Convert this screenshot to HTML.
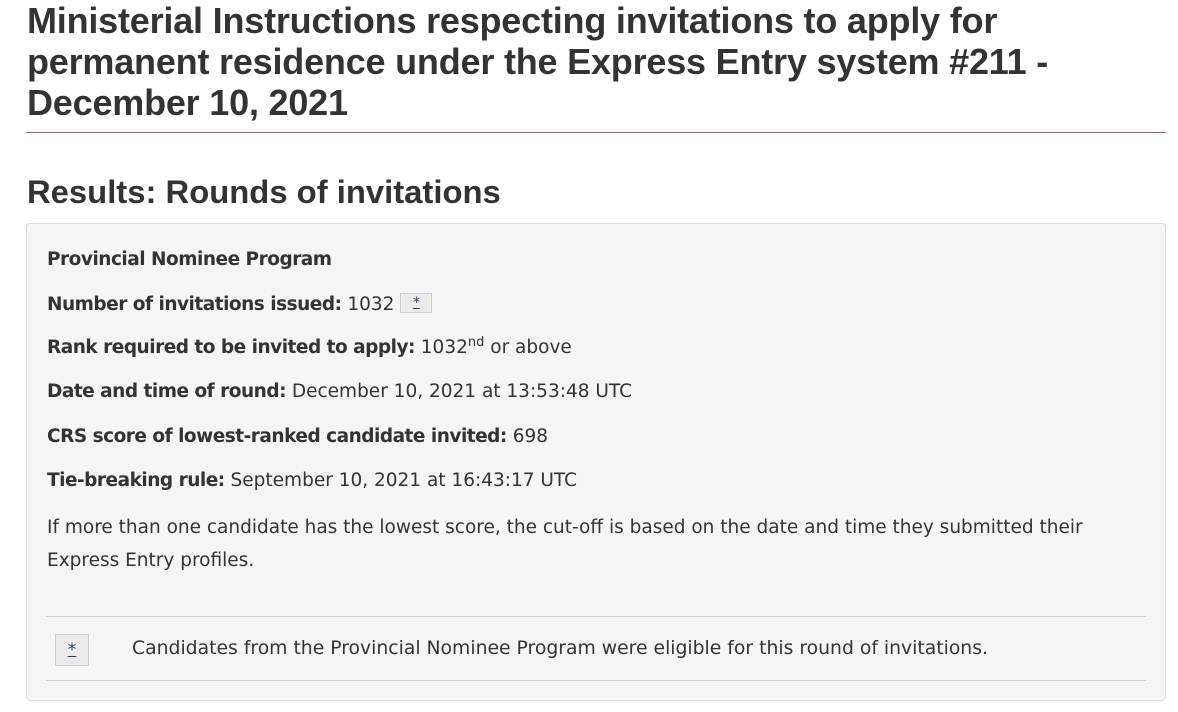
<!DOCTYPE html>
<html><head><meta charset="utf-8"><style>
body{margin:0;background:#fff;color:#333;font-family:"DejaVu Sans","Liberation Sans",sans-serif;width:1178px;height:712px;overflow:hidden;position:relative}
.a{position:absolute;white-space:nowrap}
h1{position:absolute;left:27px;top:0;margin:0;font:bold 36px/41px "Liberation Sans",sans-serif;color:#333;letter-spacing:-0.2px}
.hr{position:absolute;left:26px;top:132px;width:1140px;height:1px;background:#9e5a60}
h2{position:absolute;left:27px;top:172px;margin:0;font:bold 32.8px/40px "Liberation Sans",sans-serif;color:#333}
.box{position:absolute;left:26px;top:223px;width:1138px;height:476px;background:#f5f5f5;border:1px solid #ddd;border-radius:4px}
.l{position:absolute;left:47px;font-size:18.5px;line-height:22px;white-space:nowrap}
b{font-weight:bold;letter-spacing:-0.5px}
.fn{display:inline-block;background:#ebebeb;border:1px solid #ccc;color:#284162;font-size:14px;line-height:18px;width:30px;text-align:center;text-decoration:underline;vertical-align:3px}
.line{position:absolute;left:46px;width:1100px;height:1px;background:#ccc}
</style></head><body>
<h1>Ministerial Instructions respecting invitations to apply for<br>permanent residence under the Express Entry system #211 -<br>December 10, 2021</h1>
<div class="hr"></div>
<h2>Results: Rounds of invitations</h2>
<div class="box"></div>
<div class="l" style="top:249px"><b>Provincial Nominee Program</b></div>
<div class="l" style="top:293px"><b>Number of invitations issued:</b> 1032 <span class="fn">*</span></div>
<div class="l" style="top:337px"><b>Rank required to be invited to apply:</b> 1032<sup style="font-size:13px;line-height:0">nd</sup> or above</div>
<div class="l" style="top:381px"><b>Date and time of round:</b> December 10, 2021 at 13:53:48 UTC</div>
<div class="l" style="top:426px"><b>CRS score of lowest-ranked candidate invited:</b> 698</div>
<div class="l" style="top:470px"><b>Tie-breaking rule:</b> September 10, 2021 at 16:43:17 UTC</div>
<div class="l" style="top:511px;line-height:33px">If more than one candidate has the lowest score, the cut-off is based on the date and time they submitted their<br>Express Entry profiles.</div>
<div class="line" style="top:616px"></div>
<div class="a" style="left:55px;top:634px;width:32px;height:30px;background:#ebebeb;border:1px solid #ccc;color:#284162;font-size:17px;text-align:center;line-height:30px;text-decoration:underline">*</div>
<div class="l" style="left:132px;top:638px;font-size:18.8px">Candidates from the Provincial Nominee Program were eligible for this round of invitations.</div>
<div class="line" style="top:680px"></div>
</body></html>
